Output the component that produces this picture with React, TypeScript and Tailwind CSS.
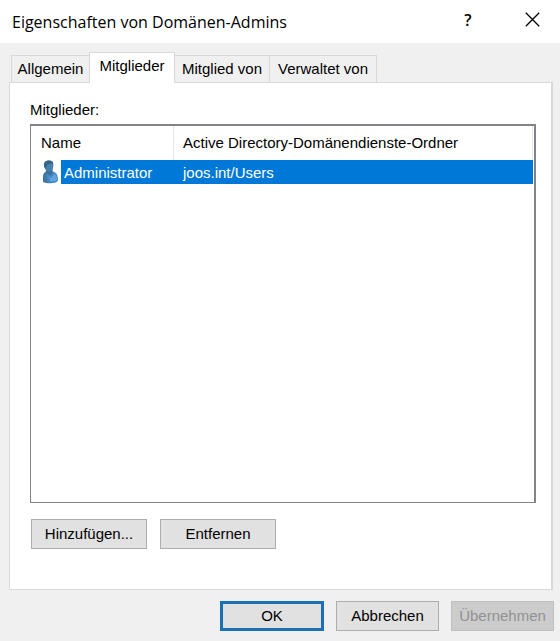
import { useState } from "react";
import clsx from "clsx";

interface Tab {
  label: string;
  width: string;
}

interface Member {
  name: string;
  folder: string;
}

const TABS: Tab[] = [
  { label: "Allgemein", width: "w-[79px]" },
  { label: "Mitglieder", width: "w-[85px]" },
  { label: "Mitglied von", width: "w-[95px]" },
  { label: "Verwaltet von", width: "w-[107px]" },
];

const MEMBERS: Member[] = [{ name: "Administrator", folder: "joos.int/Users" }];

const BUTTON = "h-[30px] border text-center leading-7";

function UserIcon() {
  return (
    <svg width="16" height="24" viewBox="0 0 16 24" aria-hidden="true" className="shrink-0">
      <path
        d="M1.2 22C.8 18 1 14 2.8 12.4l2-1h6.4l2.6 1.6c2 1.6 2.4 5.4 2 8-1.6 1.6-4.4 2.2-7.4 2.2-2.8 0-5.4-.2-7.2-1.2z"
        fill="#4287c3"
      />
      <path d="M6.4 15.6l2.6 2.6 3-4.2 1.8.8c1.2 1.4 1.4 3.6 1 5.4-2 1.2-4.4 1.4-6.4 1z" fill="#62a6e0" />
      <path d="M1.2 22C.8 18 1 14 2.8 12.4l1.8-1c-.8 3-.2 7.4 1.2 11.4-1.8 0-3.4-.2-4.6-.8z" fill="#42769f" />
      <path d="M3.8 7.6h6.8v5l-2.4 3-4.4-3.2z" fill="#426f95" />
      <path d="M2 4.4C2 1.8 4.2.4 7 .4c2.8 0 4.4 1.6 4.4 4.4 0 3.4-1.4 6.6-4.2 6.6C4.4 11.4 2 8.2 2 4.4z" fill="#4681b0" />
      <path d="M2 5.4C1.6 2 4 .4 7 .4c2.2 0 4 .8 4.3 2.8-2.1.4-4.5.4-6.3 1.6L4 9C2.8 8 2.1 6.8 2 5.4z" fill="#3a6385" />
    </svg>
  );
}

function TitleBar() {
  return (
    <header className="flex h-[43px] items-center bg-white pl-3">
      <h1 className="flex-1 font-['Open_Sans',sans-serif] text-[16px] leading-6">
        Eigenschaften von Domänen-Admins
      </h1>
      <button
        type="button"
        aria-label="Hilfe"
        className="h-10 w-16 pb-1 font-['Open_Sans',sans-serif] text-[16px] font-semibold"
      >
        ?
      </button>
      <button type="button" aria-label="Schließen" className="flex h-10 w-[60px] items-center justify-center pb-1 pl-1">
        <svg width="15" height="15" viewBox="0 0 15 15" stroke="#000" strokeWidth="1.3" aria-hidden="true">
          <path d="M.8.8l13.4 13.4M14.2.8L.8 14.2" />
        </svg>
      </button>
    </header>
  );
}

function MemberTable() {
  return (
    <div className="flex-1 border border-t-2 border-r-2 border-[#828487] bg-white pr-px">
      <table aria-labelledby="members-label" className="w-full table-fixed border-separate border-spacing-0">
        <colgroup>
          <col className="w-[143px]" />
          <col />
        </colgroup>
        <thead>
          <tr className="h-[34px] text-left">
            <th className="border-r border-[#e5e5e5] p-0 pl-2.5 font-normal">Name</th>
            <th className="border-r border-[#e5e5e5] p-0 pl-[9px] font-normal">
              Active Directory-Domänendienste-Ordner
            </th>
          </tr>
        </thead>
        <tbody>
          {MEMBERS.map((member) => (
            <tr key={member.name} className="text-white">
              <td className="p-0">
                <div className="flex h-6 gap-[3px] pl-[11px]">
                  <UserIcon />
                  <span className="flex-1 bg-[#0078d7] pl-[3px] leading-[26px]">{member.name}</span>
                </div>
              </td>
              <td className="bg-[#0078d7] p-0 pl-[9px]">
                <div className="h-6 leading-[26px]">{member.folder}</div>
              </td>
            </tr>
          ))}
        </tbody>
      </table>
    </div>
  );
}

export default function App() {
  const [active, setActive] = useState("Mitglieder");

  return (
    <div className="flex min-h-screen flex-col bg-[#f0f0f0] font-['Liberation_Sans',Arial,sans-serif] text-[15px] leading-5 text-black">
      <TitleBar />
      <main className="flex flex-1 flex-col pt-[9px] pr-[7px] pl-[9px]">
        <div role="tablist" className="z-10 -mb-px flex items-end pl-0.5">
          {TABS.map((tab) => (
            <button
              key={tab.label}
              type="button"
              role="tab"
              aria-selected={tab.label === active}
              onClick={() => setActive(tab.label)}
              className={clsx(
                "border border-l-0 border-[#d9d9d9] whitespace-nowrap first:border-l",
                tab.label === active
                  ? "h-[31px] border-b-white bg-white pb-1 shadow-[-1px_0_0_#d9d9d9]"
                  : "h-7",
                tab.width,
              )}
            >
              {tab.label}
            </button>
          ))}
        </div>
        <section
          role="tabpanel"
          className="flex flex-1 flex-col border border-r-2 border-[#d9d9d9] bg-white pt-[17px] pr-[15px] pb-10 pl-5"
        >
          <div id="members-label" className="pb-1">
            Mitglieder:
          </div>
          <MemberTable />
          <div className="flex gap-[13px] pt-4 pl-px">
            <button type="button" className={clsx(BUTTON, "w-[116px] border-[#adadad] bg-[#e1e1e1]")}>
              Hinzufügen...
            </button>
            <button type="button" className={clsx(BUTTON, "w-[116px] border-[#adadad] bg-[#e1e1e1]")}>
              Entfernen
            </button>
          </div>
        </section>
      </main>
      <footer className="flex justify-end gap-3 pt-[11px] pr-1.5 pb-2.5">
        <button type="button" className="h-[30px] w-[104px] border-[3px] border-[#1a70b4] bg-[#e1e1e1] leading-6">
          OK
        </button>
        <button type="button" className={clsx(BUTTON, "w-[103px] border-[#adadad] bg-[#e1e1e1]")}>
          Abbrechen
        </button>
        <button
          type="button"
          disabled
          className={clsx(BUTTON, "w-[103px] border-[#bfbfbf] bg-[#cccccc] text-[#929292]")}
        >
          Übernehmen
        </button>
      </footer>
    </div>
  );
}
